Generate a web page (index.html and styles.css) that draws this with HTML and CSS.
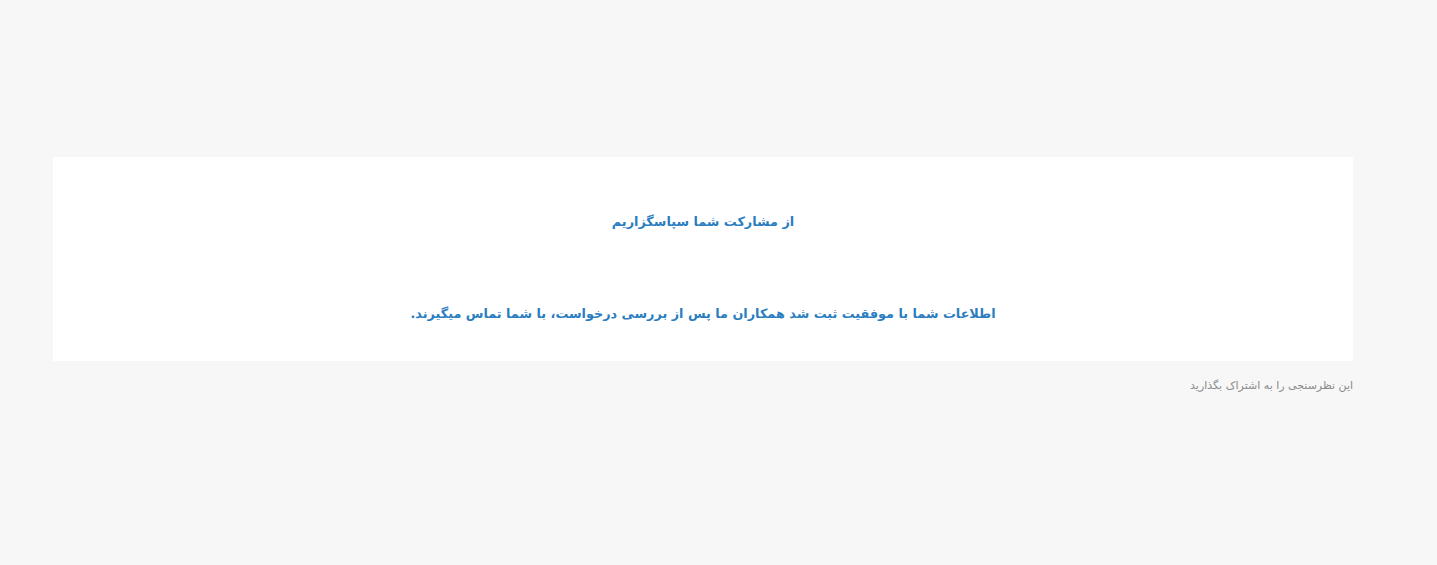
FILE: index.html
```html
<!DOCTYPE html>
<html lang="fa" dir="rtl">
<head>
<meta charset="utf-8">
<link rel="stylesheet" href="styles.css">
</head>
<body>
<div class="page">
  <div class="card">
    <h2 class="title">از مشارکت شما سپاسگزاریم</h2>
    <p class="message">اطلاعات شما با موفقیت ثبت شد همکاران ما پس از بررسی درخواست، با شما تماس میگیرند.</p>
  </div>
  <div class="share">این نظرسنجی را به اشتراک بگذارید</div>
</div>
</body>
</html>
```
FILE: styles.css
```css
html, body {
  margin: 0;
  padding: 0;
  background: #f7f7f7;
  height: 100%;
}
body {
  font-family: "DejaVu Sans", sans-serif;
}
.page {
  width: 1300px;
  margin-right: 84px;
  padding-top: 157px;
}
.card {
  background: #ffffff;
  height: 204px;
  box-sizing: border-box;
  padding-top: 53px;
  text-align: center;
  color: #2a7dbf;
}
.title {
  margin: 0;
  font-size: 12.8px;
  font-weight: bold;
  line-height: 24px;
}
.message {
  margin: 68px 0 0;
  font-size: 12.8px;
  font-weight: bold;
  line-height: 24px;
}
.share {
  margin-top: 16px;
  font-size: 11px;
  color: #8a8a8a;
  text-align: right;
  line-height: 18px;
}
```
